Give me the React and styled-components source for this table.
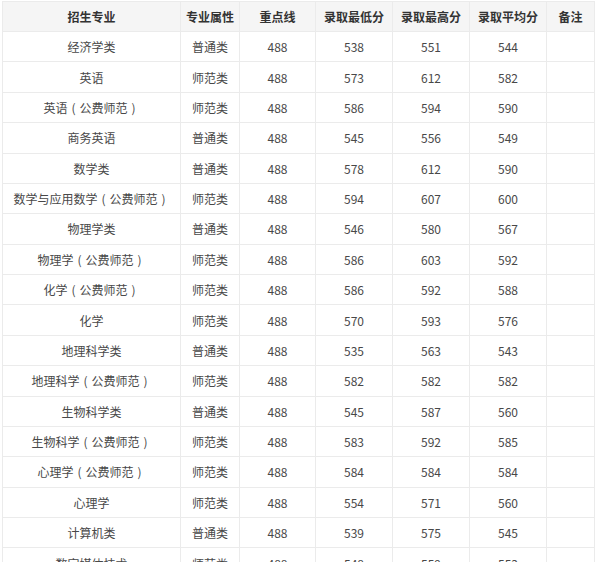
import React from 'react';
import styled, { createGlobalStyle } from 'styled-components';

const GlobalStyle = createGlobalStyle`
    html, body {
        margin: 0;
        padding: 0;
        background-color: #ffffff;
    }
    body {
        font-family: "Noto Sans CJK SC", "Noto Sans", sans-serif;
    }
`;

const Wrapper = styled.div`
    padding: 1px 0 0 2px;
    width: 600px;
    box-sizing: border-box;
`;

const Table = styled.table`
    width: 592px;
    border-collapse: collapse;
    table-layout: fixed;
    font-size: 12px;
    color: #484848;
`;

const HeadRow = styled.tr`
    background-color: #f5f5f5;
`;

const Th = styled.th`
    height: 29px;
    padding: 0;
    border: 1px solid #ebebeb;
    font-weight: bold;
    color: #333;
    text-align: center;
`;

const Td = styled.td`
    height: 29.375px;
    padding: 0;
    border: 1px solid #ebebeb;
    text-align: center;
    white-space: nowrap;
`;

// full-width bracket, glyph centred in its box
const Paren = styled.span`
    display: inline-block;
    width: 1em;
    text-align: center;
`;

const columns = [
    { title: '招生专业', width: 178 },
    { title: '专业属性', width: 59 },
    { title: '重点线', width: 76 },
    { title: '录取最低分', width: 77 },
    { title: '录取最高分', width: 77 },
    { title: '录取平均分', width: 77 },
    { title: '备注', width: 48 },
];

const rows = [
    ['经济学类', '', '普通类', 488, 538, 551, 544],
    ['英语', '', '师范类', 488, 573, 612, 582],
    ['英语', '公费师范', '师范类', 488, 586, 594, 590],
    ['商务英语', '', '普通类', 488, 545, 556, 549],
    ['数学类', '', '普通类', 488, 578, 612, 590],
    ['数学与应用数学', '公费师范', '师范类', 488, 594, 607, 600],
    ['物理学类', '', '普通类', 488, 546, 580, 567],
    ['物理学', '公费师范', '师范类', 488, 586, 603, 592],
    ['化学', '公费师范', '师范类', 488, 586, 592, 588],
    ['化学', '', '师范类', 488, 570, 593, 576],
    ['地理科学类', '', '普通类', 488, 535, 563, 543],
    ['地理科学', '公费师范', '师范类', 488, 582, 582, 582],
    ['生物科学类', '', '普通类', 488, 545, 587, 560],
    ['生物科学', '公费师范', '师范类', 488, 583, 592, 585],
    ['心理学', '公费师范', '师范类', 488, 584, 584, 584],
    ['心理学', '', '师范类', 488, 554, 571, 560],
    ['计算机类', '', '普通类', 488, 539, 575, 545],
    ['数字媒体技术', '', '师范类', 488, 548, 559, 553],
];

const MajorName = ({ name, note }) => (
    <>
        {name}
        {note && (
            <>
                <Paren>(</Paren>
                {note}
                <Paren>)</Paren>
            </>
        )}
    </>
);

const App = () => {
    return (
        <>
            <GlobalStyle />
            <Wrapper>
                <Table>
                    <colgroup>
                        {columns.map((col) => (
                            <col key={col.title} style={{ width: col.width }} />
                        ))}
                    </colgroup>
                    <thead>
                        <HeadRow>
                            {columns.map((col) => (
                                <Th key={col.title}>{col.title}</Th>
                            ))}
                        </HeadRow>
                    </thead>
                    <tbody>
                        {rows.map(([name, note, ...rest], idx) => (
                            <tr key={idx}>
                                <Td>
                                    <MajorName name={name} note={note} />
                                </Td>
                                {rest.map((cell, i) => (
                                    <Td key={i}>{cell}</Td>
                                ))}
                                <Td></Td>
                            </tr>
                        ))}
                    </tbody>
                </Table>
            </Wrapper>
        </>
    );
};

export default App;
